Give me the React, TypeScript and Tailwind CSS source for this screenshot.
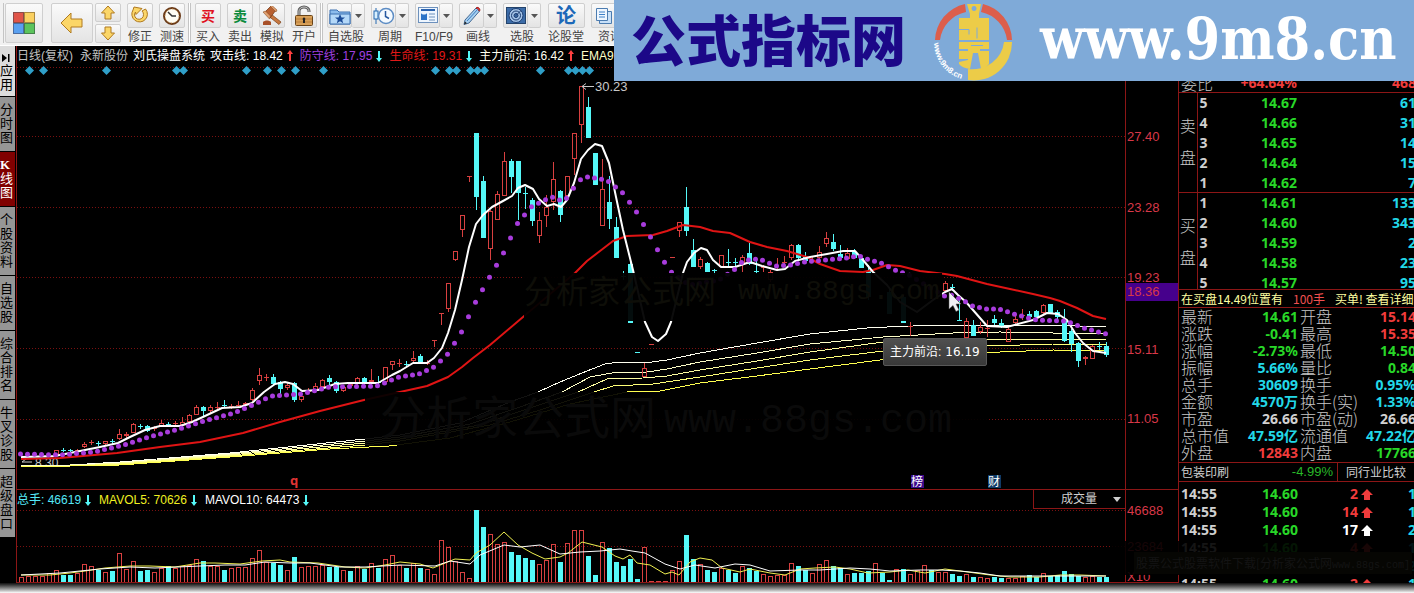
import type { ReactNode } from "react";

const UP = "#d84040";
const DOWN = "#55f8f8";

// [slot, high, bodyTop, bodyBottom, low, direction]
type Candle = [number, number, number, number, number, "u" | "d"];

const candles: Candle[] = [
  [5, 450, 450, 455, 455, "u"], [6, 448, 450, 451, 452, "d"], [7, 449, 450, 451, 452, "d"], [8, 449, 450, 452, 453, "u"],
  [9, 442, 444, 447, 448, "u"], [10, 440, 442, 443, 445, "u"], [11, 441, 443, 444, 446, "d"], [12, 441, 441, 444, 445, "u"],
  [13, 439, 441, 442, 444, "d"], [14, 429, 434, 439, 440, "u"], [15, 432, 434, 436, 438, "u"], [16, 423, 424, 433, 433, "u"],
  [17, 424, 426, 427, 429, "d"], [18, 425, 426, 431, 432, "d"], [19, 426, 428, 429, 431, "u"], [20, 420, 423, 426, 427, "u"],
  [21, 422, 424, 425, 427, "d"], [22, 421, 423, 424, 426, "u"], [23, 417, 422, 425, 426, "u"], [24, 414, 415, 422, 422, "u"],
  [25, 405, 407, 415, 415, "u"], [26, 406, 407, 411, 416, "d"], [27, 405, 407, 411, 413, "u"], [28, 402, 407, 408, 411, "u"],
  [29, 400, 405, 406, 408, "d"], [30, 404, 406, 407, 409, "u"], [31, 401, 405, 406, 408, "u"], [32, 402, 403, 405, 406, "u"],
  [33, 388, 390, 400, 401, "u"], [34, 368, 375, 381, 385, "u"], [35, 374, 377, 378, 381, "u"], [36, 374, 377, 384, 385, "d"],
  [37, 381, 382, 389, 394, "d"], [38, 382, 385, 388, 390, "u"], [39, 382, 383, 400, 402, "d"], [40, 395, 396, 400, 402, "u"],
  [41, 388, 390, 392, 393, "u"], [42, 383, 386, 391, 392, "u"], [43, 379, 380, 387, 388, "u"], [44, 375, 378, 382, 385, "d"],
  [45, 381, 382, 391, 393, "d"], [46, 386, 387, 391, 392, "u"], [47, 382, 384, 386, 387, "u"], [48, 377, 378, 384, 385, "u"],
  [49, 377, 378, 383, 384, "d"], [50, 369, 380, 382, 384, "u"], [51, 376, 382, 383, 385, "d"], [52, 367, 367, 382, 382, "u"],
  [53, 361, 361, 365, 370, "u"], [54, 359, 363, 364, 367, "u"], [55, 361, 364, 365, 367, "d"], [56, 351, 358, 361, 363, "u"],
  [57, 354, 356, 363, 363, "d"], [58, 360, 363, 364, 365, "u"], [59, 340, 340, 341, 347, "u"], [60, 313, 313, 314, 325, "u"],
  [61, 283, 283, 309, 312, "u"], [62, 251, 251, 260, 261, "u"], [63, 215, 215, 230, 237, "u"], [64, 176, 176, 177, 182, "u"],
  [65, 133, 133, 197, 210, "d"], [66, 176, 181, 238, 238, "d"], [67, 210, 211, 249, 260, "u"], [68, 191, 194, 220, 220, "u"],
  [69, 152, 161, 196, 196, "u"], [70, 159, 161, 177, 193, "d"], [71, 161, 161, 193, 220, "d"], [72, 187, 193, 194, 209, "d"],
  [73, 198, 200, 221, 226, "d"], [74, 212, 220, 236, 243, "u"], [75, 195, 207, 216, 227, "u"], [76, 162, 179, 202, 210, "u"],
  [77, 190, 191, 215, 222, "d"], [78, 176, 176, 196, 200, "u"], [79, 133, 133, 159, 175, "u"], [80, 86, 86, 125, 143, "u"],
  [81, 97, 107, 138, 138, "d"], [82, 153, 153, 185, 185, "d"], [83, 159, 189, 226, 226, "u"], [84, 176, 202, 219, 229, "d"],
  [85, 217, 227, 258, 258, "d"], [86, 271, 276, 277, 280, "d"], [87, 260, 264, 323, 323, "d"], [88, 352, 352, 353, 353, "d"],
  [89, 363, 368, 377, 377, "u"], [90, 344, 344, 345, 345, "u"], [93, 257, 257, 258, 258, "u"], [94, 222, 222, 231, 237, "u"],
  [95, 187, 207, 231, 236, "d"], [96, 239, 250, 267, 267, "d"], [97, 257, 259, 267, 269, "u"], [98, 262, 263, 272, 272, "d"],
  [99, 269, 270, 271, 275, "d"], [100, 255, 255, 267, 267, "u"], [101, 249, 262, 263, 267, "d"], [102, 258, 262, 263, 266, "d"],
  [103, 255, 257, 265, 272, "u"], [104, 243, 253, 264, 265, "d"], [105, 260, 271, 272, 274, "d"], [106, 265, 267, 268, 272, "u"],
  [107, 270, 272, 280, 282, "u"], [108, 258, 269, 270, 271, "u"], [109, 256, 262, 263, 267, "u"], [110, 244, 245, 258, 260, "u"],
  [111, 244, 245, 258, 260, "d"], [112, 252, 257, 261, 264, "d"], [113, 257, 260, 261, 263, "u"], [114, 246, 252, 258, 260, "u"],
  [115, 232, 238, 244, 247, "u"], [116, 234, 242, 249, 251, "d"], [117, 245, 254, 258, 260, "d"], [118, 248, 253, 259, 260, "u"],
  [119, 249, 252, 258, 259, "d"], [120, 256, 258, 268, 268, "d"], [121, 265, 271, 297, 300, "d"], [124, 288, 292, 314, 314, "d"],
  [126, 295, 297, 323, 323, "d"], [127, 322, 326, 327, 336, "u"], [132, 281, 283, 291, 292, "u"], [133, 284, 287, 288, 291, "d"],
  [134, 300, 320, 321, 321, "d"], [135, 318, 321, 338, 338, "u"], [136, 320, 325, 336, 336, "d"], [137, 322, 327, 332, 334, "u"],
  [138, 320, 328, 329, 337, "u"], [139, 315, 319, 323, 325, "d"], [140, 319, 323, 327, 328, "d"], [141, 326, 329, 342, 342, "u"],
  [142, 315, 319, 323, 324, "u"], [143, 309, 315, 316, 320, "u"], [144, 311, 314, 317, 320, "d"], [145, 310, 311, 317, 318, "d"],
  [146, 304, 305, 313, 314, "u"], [147, 304, 304, 313, 314, "d"], [148, 310, 312, 317, 319, "d"], [149, 309, 321, 341, 342, "d"],
  [150, 329, 331, 344, 352, "d"], [151, 342, 343, 361, 367, "d"], [152, 356, 357, 359, 365, "u"], [153, 345, 346, 359, 359, "u"],
  [154, 342, 346, 347, 350, "d"], [155, 342, 346, 355, 357, "d"],
];

// top of each volume bar, negative for a falling day
const volumes = [
  577, 576, 576, 576, 573, 570, -575, -575, 573, 564, 566, -570, 572, -571, 553, 569, 561, -571, -570, 572,
  568, -566, 568, 566, 565, 559, -561, 566, 566, -570, 568, 567, 567, 558, 550, 562, -563, -565, 570, -557,
  567, 566, 566, 565, -567, -567, 570, -571, 566, -569, 563, -568, 559, 555, 565, -568, 563, -568, 569, 574,
  540, 547, 561, 572, 578, -510, -527, 534, 544, 542, -552, -555, -558, -560, 564, 560, 544, -562, 543, 530,
  530, -556, -575, 542, -548, -562, -566, -559, -579, 547, 581, 581, 581, 570, 561, -535, -559, 564, -570, -572,
  568, -570, -573, 566, -568, -571, 574, 576, 575, 575, 563, -566, -570, 573, 564, 560, -566, -568, 574, -573,
  -573, -571, 563, -573, -580, 569, -569, 574, 570, 565, -570, 572, 572, -574, -576, 574, -577, 577, 578, -577,
  -578, 578, 578, 576, -575, -577, 573, -576, -575, -571, -574, -576, 577, 576, -577, -577,
];

const attackLine =
  "21,457 55,456 80,451 100,447 118,443 130,437 145,430 160,426 180,426 192,422 205,416 222,408 240,407 252,403 264,392 275,384 285,382 293,384 302,391 318,390 335,384 348,383 378,383 392,375 400,371 413,363 427,363 434,358 442,348 448,333 455,310 462,280 469,247 476,224 483,215 492,207 503,201 512,196 518,188 525,185 533,189 539,199 547,206 554,204 561,207 567,200 574,183 581,159 588,150 595,144 602,146 609,163 616,197 623,230 633,270 645,322 652,337 658,341 666,334 671,322 683,273 687,262 694,253 701,248 707,250 713,260 721,267 735,267 750,262 762,266 777,270 785,269 795,261 810,257 827,254 843,251 855,251 863,260 873,272 887,285 900,302 917,312 933,300 945,292 952,289 958,295 966,302 987,326 1007,327 1033,320 1047,313 1058,314 1067,320 1075,333 1083,343 1093,351 1106,353";
const lifeLine =
  "21,459 60,458 83,456 117,453 160,447 200,442 243,433 280,422 320,411 364,400 400,392 427,386 448,377 462,367 473,358 490,345 523,317 575,273 587,261 600,251 613,241 627,236 653,235 667,231 683,225 700,227 713,231 730,233 750,242 767,247 787,251 807,257 820,264 840,271 863,272 873,270 887,265 900,266 920,271 945,274 957,276 987,284 1010,289 1033,294 1050,298 1060,301 1077,308 1093,316 1106,319";
const emaLines = [
  { color: "#fffff0", points: "21,465 70,465 120,462 230,453 365,439 400,435 460,423 510,402 538,392 560,382 587,371 605,364 620,362 652,362 667,360 700,353 757,343 810,334 867,328 887,327 940,325 1053,325 1106,327" },
  { color: "#ffffc8", points: "21,465 70,465 120,463 230,454 365,441 400,437 470,424 520,407 562,392 590,377 617,372 647,372 667,369 700,362 757,353 810,344 883,337 953,333 1000,332 1106,334" },
  { color: "#ffffa0", points: "21,466 70,466 120,463 230,455 365,443 400,439 480,425 530,408 578,392 607,379 643,378 667,376 700,370 757,361 810,352 883,342 947,339 1106,339" },
  { color: "#ffff78", points: "21,466 70,466 120,464 230,456 365,445 400,441 490,425 540,410 594,392 613,386 653,384 700,377 757,368 810,360 883,351 987,346 1053,344 1106,344" },
  { color: "#ffff50", points: "21,466 70,466 120,465 230,457 330,449 389,446 450,438 510,422 570,404 627,392 660,391 700,383 757,376 810,369 880,360 1000,352 1053,350 1106,351" },
];
const defencePoints: [number, number][] = [
  [21, 454], [62, 455], [95, 452], [125, 445], [150, 437], [180, 429], [205, 421], [235, 413], [258, 403], [272, 396],
  [288, 395], [302, 394], [315, 391], [330, 387], [378, 386], [400, 377], [420, 374], [435, 367], [448, 355], [462, 333],
  [475, 305], [490, 278], [504, 254], [518, 224], [532, 207], [546, 200], [553, 197], [560, 200], [567, 199], [574, 189],
  [581, 180], [588, 177], [602, 179], [609, 181], [623, 192], [637, 211], [651, 236], [664, 260], [672, 272], [690, 285],
  [720, 280], [735, 270], [741, 263], [749, 260], [755, 259], [763, 260], [777, 266], [792, 265], [805, 262], [827, 260],
  [847, 258], [860, 256], [868, 259], [882, 263], [896, 270], [910, 275], [945, 296], [952, 295], [967, 302], [973, 306],
  [987, 309], [1000, 309], [1015, 314], [1037, 320], [1067, 321], [1085, 328], [1107, 334],
];
const maVol5 =
  "21,575 50,575 70,573 85,571 105,568 130,566 150,566 175,567 200,563 215,563 240,564 262,561 280,560 290,562 318,563 345,567 365,568 385,565 400,562 420,564 433,568 455,559 470,560 476,553 490,545 504,532 518,545 532,553 545,559 560,557 568,553 582,542 602,547 615,556 623,559 630,555 637,563 650,565 665,574 672,572 679,575 690,562 700,558 712,560 722,568 740,572 750,569 770,573 785,575 800,569 815,568 835,567 850,569 868,573 890,572 908,570 925,573 945,569 960,571 990,575 1010,577 1040,577 1060,575 1080,575 1106,576";
const maVol10 =
  "21,575 60,573 100,569 130,567 155,568 200,566 225,565 245,565 265,562 290,563 310,563 340,567 365,567 400,565 435,566 450,561 470,564 480,555 504,545 520,547 540,545 560,554 580,552 600,551 620,549 632,551 645,553 665,564 680,569 695,565 715,568 735,564 750,565 770,571 800,570 820,570 850,568 870,569 890,571 920,570 940,570 960,571 980,573 1000,576 1060,576 1106,576";
const diamonds = [29, 43, 106, 176, 183, 246, 267, 281, 295, 323, 435, 449, 456, 470, 477, 484, 540, 568, 575, 582, 589];

const slotX = (i: number) => 21.5 + i * 7;

function interpolate(points: [number, number][], x: number) {
  for (let i = 1; i < points.length; i++) {
    const [x0, y0] = points[i - 1];
    const [x1, y1] = points[i];
    if (x <= x1) return y0 + ((y1 - y0) * (x - x0)) / (x1 - x0);
  }
  return points[points.length - 1][1];
}

function GridLine({ y }: { y: number }) {
  return <line x1={17} x2={1125} y1={y + 0.5} y2={y + 0.5} stroke="#7a1010" strokeDasharray="1 2" />;
}

function CandleShape({ data }: { data: Candle }) {
  const [slot, high, top, bottom, low, dir] = data;
  const x = slotX(slot);
  const color = dir === "u" ? UP : DOWN;
  if (bottom - top <= 1) {
    return (
      <g stroke={color}>
        <line x1={x} x2={x} y1={high} y2={low} />
        <line x1={x - 2.5} x2={x + 2.5} y1={top + 0.5} y2={top + 0.5} />
      </g>
    );
  }
  return (
    <g stroke={color}>
      <line x1={x} x2={x} y1={high} y2={dir === "u" ? top : low} />
      <line x1={x} x2={x} y1={bottom} y2={low} />
      {dir === "u" ? (
        <rect x={x - 2} y={top + 0.5} width={4} height={bottom - top - 1} fill="none" />
      ) : (
        <rect x={x - 2.5} y={top} width={5} height={bottom - top} fill={color} stroke="none" />
      )}
    </g>
  );
}

function PriceChart() {
  return (
    <svg width={1108} height={423} viewBox="17 66 1108 423" className="block max-w-none" aria-label="日线">
      {[67, 136, 207, 277, 348, 419].map((y) => (
        <GridLine key={y} y={y} />
      ))}
      {diamonds.map((x) => (
        <path key={x} d={`M${x + 0.5} 66l4.5 4.5l-4.5 4.5l-4.5 -4.5z`} fill="#2f9fc8" />
      ))}
      <text x={35} y={467} fontSize={12} fill="#c8c8c8" className="font-['Liberation_Sans',sans-serif]">8.30</text>
      <path d="M22 462h10M22 462l4 -3" stroke="#c8c8c8" fill="none" />
      <rect x={30} y={452} width={32} height={7} fill="#000" />
      {emaLines.map((line) => (
        <polyline key={line.color} points={line.points} fill="none" stroke={line.color} shapeRendering="crispEdges" />
      ))}
      {candles.map((c) => (
        <CandleShape key={c[0]} data={c} />
      ))}
      <polyline points={lifeLine} fill="none" stroke="#e01414" strokeWidth={2} strokeLinejoin="round" />
      <polyline points={attackLine} fill="none" stroke="#fff" strokeWidth={2} strokeLinejoin="round" />
      {Array.from({ length: 156 }, (_, i) => (
        <circle key={i} cx={slotX(i) - 1} cy={interpolate(defencePoints, slotX(i))} r={2.5} fill="#a83cdc" />
      ))}

      <rect x={524} y={273} width={418} height={48} fill="#000" opacity={0.95} />
      <rect x={365} y={392} width={623} height={53} fill="#000" opacity={0.93} />
      <g fill="#0e0e08" className="font-['Liberation_Mono','Noto_Sans_CJK_SC',monospace]">
        <text x={524} y={303} fontSize={32}>分析家公式网</text>
        <text x={738} y={299} fontSize={28}>www.88gs.com</text>
      </g>
      <g fill="#0a0a0a" className="font-['Liberation_Mono','Noto_Sans_CJK_SC',monospace]">
        <text x={380} y={434} fontSize={46}>分析家公式网</text>
        <text x={664} y={432} fontSize={40}>www.88gs.com</text>
      </g>

      <path d="M582 86.5h12M582 86.5l4 -3M582 86.5l4 3" stroke="#c8c8c8" fill="none" />
      <text x={595} y={91} fontSize={13} fill="#c8c8c8" className="font-['Liberation_Sans',sans-serif]">30.23</text>

      <text x={290} y={485} fontSize={13} fontWeight={700} fill="#e03434" className="font-['Noto_Sans',sans-serif]">q</text>
      <rect x={911} y={475} width={13} height={13} fill="#3c0a8c" />
      <rect x={988} y={475} width={13} height={13} fill="#103a66" />
      <g fontSize={12} fill="#fff" className="font-['Noto_Sans_CJK_SC',sans-serif]">
        <text x={911} y={486}>榜</text>
        <text x={988} y={486}>财</text>
      </g>
      <path d="M949 292v17l4 -3.500l3 6l3 -1.500l-3 -6h5z" fill="#f0f0f4" stroke="#555" strokeWidth={0.5} />
    </svg>
  );
}

function VolumeChart() {
  return (
    <svg width={1108} height={73} viewBox="17 510 1108 73" className="block max-w-none" aria-label="成交量">
      <GridLine y={510} />
      <GridLine y={546} />
      {volumes.map((v, i) => {
        const top = Math.abs(v);
        return v < 0 ? (
          <rect key={i} x={slotX(i) - 2.5} y={top} width={5} height={583 - top} fill={DOWN} />
        ) : (
          <rect key={i} x={slotX(i) - 2} y={top + 0.5} width={4} height={582 - top} fill="none" stroke={UP} />
        );
      })}
      <line x1={17} x2={1125} y1={582.5} y2={582.5} stroke="#8c1616" />
      <polyline points={maVol5} fill="none" stroke="#f0f050" />
      <polyline points={maVol10} fill="none" stroke="#fff" />
    </svg>
  );
}

const axisLabels: [string, number][] = [
  ["27.40", 136], ["23.28", 207], ["19.23", 277], ["15.11", 349], ["11.05", 418], ["46688", 510], ["23684", 546],
];

function PriceAxis() {
  return (
    <svg width={52} height={537} viewBox="1126 46 52 537" className="block">
      <line x1={1126} x2={1178} y1={489.5} y2={489.5} stroke="#8c1616" />
      <rect x={1126} y={283} width={52} height={18} fill="#46008c" />
      <g fontSize={13} fill="#d83848" className="font-['Liberation_Sans',sans-serif]">
        {axisLabels.map(([label, y]) => (
          <text key={label} x={1127} y={y + 5}>{label}</text>
        ))}
        <text x={1127} y={296}>18.36</text>
        <text x={1127} y={581}>X10</text>
      </g>
      <line x1={1126} x2={1178} y1={582.5} y2={582.5} stroke="#8c1616" />
    </svg>
  );
}

function ArrowMark({ up, color }: { up?: boolean; color: string }) {
  return (
    <svg width={6} height={12} viewBox="0 0 6 12" className="shrink-0">
      {up ? <path d="M3 0l3 4h-2v7h-2v-7h-2z" fill={color} /> : <path d="M3 12l3 -4h-2v-7h-2v7h-2z" fill={color} />}
    </svg>
  );
}

function Indicator({ label, value, color, up }: { label: string; value: string; color: string; up?: boolean }) {
  return (
    <span className="flex items-center gap-1">
      <span className={color}>{label}: {value}</span>
      <ArrowMark up={up} color={up ? "#ff4040" : "#55f8f8"} />
    </span>
  );
}

/* ---------- toolbar ---------- */

const btn = "flex items-center justify-center rounded-xs border border-[#cfcfcf] bg-gradient-to-b from-[#fafafa] to-[#e4e4e4]";

function Tool({ label, children }: { label: string; children: ReactNode }) {
  return (
    <button className="flex w-8 flex-col items-center text-xs leading-[18px] whitespace-nowrap text-[#444]">
      <span className={`${btn} h-[25px] w-[26px]`}>{children}</span>
      {label}
    </button>
  );
}

function MenuTool({ label, menu = true, children }: { label: string; menu?: boolean; children: ReactNode }) {
  return (
    <button className="flex w-11 flex-col items-center text-xs leading-[18px] whitespace-nowrap text-[#444]">
      <span className="flex">
        <span className={`${btn} h-[25px] ${menu ? "w-[25px]" : "w-[37px]"}`}>{children}</span>
        {menu && (
          <span className={`${btn} h-[25px] w-[13px] border-l-0`}>
            <svg width={7} height={4}><path d="M0 0h7l-3.500 4z" fill="#555" /></svg>
          </span>
        )}
      </span>
      {label}
    </button>
  );
}

function Separator() {
  return <span className="mr-px h-10 w-[3px] shrink-0 border-x border-[#c4c4c4] bg-white" />;
}

const gold = { fill: "#fbd668", stroke: "#b07a20", strokeWidth: 1 };

function Toolbar() {
  return (
    <header className="flex h-[46px] items-start overflow-hidden border-b border-white bg-[#f1f1f1] pt-[3px] font-['Liberation_Sans','Noto_Sans_CJK_SC',sans-serif]">
      <span className="ml-px h-10 w-[3px] shrink-0 border-r border-[#c4c4c4]" />
      <button className={`${btn} ml-px h-10 w-[38px] shrink-0`} aria-label="主页">
        <svg width={22} height={22}>
          <rect x={0.5} y={0.5} width={10} height={10} fill="#e05448" stroke="#8c4a48" />
          <rect x={11.500} y={0.5} width={10} height={10} fill="#fad060" stroke="#a88840" />
          <rect x={0.5} y={11.500} width={10} height={10} fill="#5aa0f0" stroke="#4a6ca0" />
          <rect x={11.500} y={11.500} width={10} height={10} fill="#5cc45c" stroke="#44804a" />
        </svg>
      </button>
      <button className={`${btn} ml-2 h-10 w-[42px] shrink-0`} aria-label="后退">
        <svg width={24} height={22}><path d="M1 11l10 -10v6h11v8h-11v6z" {...gold} /></svg>
      </button>
      <div className="ml-0.5 flex shrink-0 flex-col gap-0.5">
        <button className={`${btn} h-[19px] w-[26px]`} aria-label="上翻">
          <svg width={16} height={15}><path d="M8 1l6.500 7h-3.500v6h-6v-6h-3.500z" {...gold} /></svg>
        </button>
        <button className={`${btn} h-[19px] w-[26px]`} aria-label="下翻">
          <svg width={16} height={15}><path d="M8 14l6.500 -7h-3.500v-6h-6v6h-3.500z" {...gold} /></svg>
        </button>
      </div>
      <div className="ml-[3px] flex shrink-0">
        <Tool label="修正">
          <svg width={20} height={20} viewBox="0 0 20 20">
            <path d="M4 1l8 1.500l-6 6l-0.500 -2.500a4.500 4.500 0 1 0 8 2.500q0 -2 -1.500 -3.500l3.500 -2a7.800 7.800 0 1 1 -12.500 1z" {...gold} />
          </svg>
        </Tool>
        <Tool label="测速">
          <svg width={20} height={20} viewBox="0 0 20 20">
            <circle cx={10} cy={10} r={8} fill="#fffdf4" stroke="#6a3a18" strokeWidth={2} />
            <circle cx={10} cy={10} r={7} fill="none" stroke="#d8a050" strokeDasharray="1 2.660" />
            <path d="M6 6l4 4h4" stroke="#333" strokeWidth={1.500} fill="none" />
          </svg>
        </Tool>
      </div>
      <Separator />
      <div className="flex shrink-0">
        <Tool label="买入"><b className="text-sm text-[#e01020]">买</b></Tool>
        <Tool label="卖出"><b className="text-sm text-[#0a8a3a]">卖</b></Tool>
        <Tool label="模拟">
          <svg width={22} height={20} viewBox="0 0 22 20">
            <path d="M10 8l10 8l-2 2.500l-10 -8z" fill="#c87840" stroke="#7a4018" strokeWidth={0.700} />
            <path d="M4 6l6 -6l5 4l-6 8z" fill="#b86030" stroke="#6a3010" strokeWidth={0.700} />
            <path d="M2 6l2.500 -1l5 5l-1 3zM9 0l2 -0.500l5 4.500l-1 2z" fill="#e0a070" stroke="#7a4018" strokeWidth={0.500} />
            <path d="M2 16c2 -2 6 -2 8 0v3h-8z" fill="#a85028" />
          </svg>
        </Tool>
        <Tool label="开户">
          <svg width={20} height={22} viewBox="0 0 20 22">
            <path d="M5 11v-5a5 4 0 0 1 10 0v1" fill="none" stroke="#5a5a5a" strokeWidth={3} />
            <path d="M5 11v-5a5 4 0 0 1 10 0v1" fill="none" stroke="#c8c8c8" strokeWidth={1} />
            <rect x={1.500} y={10.500} width={17} height={10} rx={1} fill="#d8a058" stroke="#6a4418" />
            <path d="M2 14h16M2 17h16" stroke="#b87c38" />
            <path d="M10 12.500a1.500 1.500 0 0 1 1 2.500v3h-2v-3a1.500 1.500 0 0 1 1 -2.500z" fill="#222" />
          </svg>
        </Tool>
      </div>
      <Separator />
      <div className="flex shrink-0">
        <MenuTool label="自选股">
          <svg width={22} height={18} viewBox="0 0 22 18">
            <path d="M1 3h7l2 2h11v12h-20z" fill="#8cbcec" stroke="#3c70b0" />
            <path d="M1 7h20v10h-20z" fill="#b4d8f8" stroke="#3c70b0" />
            <path d="M11 7l1.500 3.500h3.500l-2.800 2.200l1 3.500l-3.200 -2l-3.200 2l1 -3.500l-2.800 -2.200h3.500z" fill="#1c4c98" />
          </svg>
        </MenuTool>
        <MenuTool label="周期">
          <svg width={22} height={20} viewBox="0 0 22 20">
            <path d="M3 2v16" stroke="#2468b0" />
            <rect x={1} y={5} width={4} height={8} fill="#d8f0ff" stroke="#2468b0" />
            <circle cx={13} cy={10} r={7.500} fill="#f4faff" stroke="#5c8cc4" strokeWidth={1.500} />
            <path d="M12.500 5v5.500l3.500 2" stroke="#2458a0" strokeWidth={1.500} fill="none" />
          </svg>
        </MenuTool>
        <MenuTool label="F10/F9">
          <svg width={20} height={17} viewBox="0 0 20 17">
            <rect x={0.500} y={0.500} width={19} height={15} fill="#eef6ff" stroke="#6c90bc" />
            <path d="M3 3h14" stroke="#2c64b0" strokeWidth={2} />
            <path d="M3 6c1 2 5 2 6 0v7h-6z" fill="#2c74c8" />
            <path d="M11 7h6M11 10h6M11 13h6" stroke="#6c90bc" />
          </svg>
        </MenuTool>
        <MenuTool label="画线">
          <svg width={20} height={20} viewBox="0 0 20 20">
            <path d="M3 14l11 -12l3.500 3l-10.500 12l-5 1.500z" fill="#a8d0f0" stroke="#446a94" />
            <path d="M14 2c1.500 -2 5 1 3.500 3l-3.500 -3z" fill="#e84040" stroke="#a02020" />
            <path d="M5 15l11 -12" stroke="#3c7cc0" />
            <path d="M2 18.500l1 -3l2 1.800z" fill="#222" />
          </svg>
        </MenuTool>
        <MenuTool label="选股">
          <svg width={20} height={18} viewBox="0 0 20 18">
            <rect x={0.500} y={0.500} width={19} height={16} fill="#3c6ca8" stroke="#24446c" />
            <circle cx={10} cy={8.500} r={7} fill="#a4c4e8" stroke="#1c3c70" />
            <circle cx={10} cy={8.500} r={4.500} fill="none" stroke="#1c3c70" />
            <circle cx={10} cy={8.500} r={2} fill="#3c6ca8" stroke="#1c3c70" />
            <path d="M10 8.500l5 -5" stroke="#1c3c70" />
          </svg>
        </MenuTool>
        <MenuTool label="论股堂" menu={false}>
          <b className="text-xl leading-none text-[#1c68b8]">论</b>
        </MenuTool>
        <MenuTool label="资讯">
          <svg width={18} height={18} viewBox="0 0 18 18">
            <path d="M4.500 4.500h12v12h-12z" fill="#c8e0f8" stroke="#4c7cb0" />
            <path d="M1.500 1.500h11v12h-11z" fill="#eef6ff" stroke="#4c7cb0" />
            <path d="M4 5h6M4 7.500h6M4 10h6" stroke="#3c80c8" />
          </svg>
        </MenuTool>
      </div>
    </header>
  );
}

/* ---------- banner ---------- */

function Banner() {
  return (
    <div className="absolute top-0 right-0 left-[614px] z-10 flex h-[81px] items-center overflow-hidden bg-[#7faad8] whitespace-nowrap">
      <strong className="ml-[17px] w-[278px] shrink-0 pb-2 font-['Noto_Sans_CJK_SC',sans-serif] text-[55px] leading-[60px] font-black text-[#1c0888]">
        公式指标网
      </strong>
      <svg width={80} height={80} viewBox="934 0 80 80" className="ml-6 shrink-0">
        <g fill="#dc5e4c">
          <path d="M936 39A38 38 0 0 1 966 3L967 11A33 33 0 0 0 941 39z" />
          <path d="M1013 39A38 38 0 0 0 984 3L982 11A33 33 0 0 1 1008 39z" />
        </g>
        <g fill="#eccc48">
          <path d="M1013 41A38 38 0 0 1 969 79V68A32 30 0 0 0 1005 41z" />
          <path
            fillRule="evenodd"
            d="M968 3h14l-2 10v4h10v22h-30v-10h9v-1h-9v-11h11v-4zM975 5a2.500 2.500 0 1 0 0.100 0z"
          />
          <path d="M960 41h30v7h-9v2h9v13q-3 4 -8 5l-3 -16h-5l-3 16q-8 -1 -11 -5v-2l9 -2v-1h-9v-8h9v-2h-9z" />
        </g>
        <path d="M960 28.500h10v5M978 26.500v11M972 44.500h12" stroke="#7faad8" fill="none" />
        <path id="seal-arc" d="M935 42A38 38 0 0 0 968 79" fill="none" />
        <text fontSize={8} fontWeight={700} fill="#fff" className="font-['Liberation_Sans',sans-serif]">
          <textPath href="#seal-arc">www.9m8.cn</textPath>
        </text>
      </svg>
      <a href="#" className="ml-[27px] pb-1 font-['DejaVu_Serif_Condensed','DejaVu_Serif',serif] text-[57px] leading-[60px] font-bold text-white">
        www.9m8.cn
      </a>
    </div>
  );
}

/* ---------- side navigation ---------- */

const tabs = ["分时图", "K线图", "个股资料", "自选股", "综合排名", "牛叉诊股", "超级盘口"];

function SideTabs() {
  return (
    <nav className="mr-px flex w-[15px] shrink-0 flex-col text-[13px] leading-[14px]">
      <button className="flex flex-col items-start bg-[#dcdcdc] pt-1.5 pb-1 text-black">
        <svg width={10} height={12} className="ml-px"><path d="M1 2l5 4l-5 4zM7 2h1.500v8h-1.500z" /></svg>
        <span className="w-[13px] text-left break-all">应用</span>
      </button>
      {tabs.map((tab) => (
        <button
          key={tab}
          className={`border-t border-black py-1.5 text-left ${tab === "K线图" ? "bg-[#800000] text-white" : "bg-[#969696] text-black"}`}
        >
          {tab.split("").map((ch) => (
            <span key={ch} className="block w-[13px]">{ch === "K" ? <b className="font-['Liberation_Serif',serif]">K</b> : ch}</span>
          ))}
        </button>
      ))}
    </nav>
  );
}

/* ---------- quote panel ---------- */

const sells = [["5", "14.67", "61"], ["4", "14.66", "31"], ["3", "14.65", "14"], ["2", "14.64", "15"], ["1", "14.62", "7"]];
const buys = [["1", "14.61", "133"], ["2", "14.60", "343"], ["3", "14.59", "2"], ["4", "14.58", "23"], ["5", "14.57", "95"]];

const R = "text-[#f03c3c]";
const G = "text-[#28d828]";
const C = "text-[#22d8e8]";
const W = "text-[#d0d0d0]";

const stats = [
  ["最新", "14.61", G, "开盘", "15.14", R],
  ["涨跌", "-0.41", G, "最高", "15.35", R],
  ["涨幅", "-2.73%", G, "最低", "14.50", G],
  ["振幅", "5.66%", C, "量比", "0.84", G],
  ["总手", "30609", C, "换手", "0.95%", C],
  ["金额", "4570万", C, "换手(实)", "1.33%", C],
  ["市盈", "26.66", W, "市盈(动)", "26.66", W],
  ["总市值", "47.59亿", C, "流通值", "47.22亿", C],
  ["外盘", "12843", R, "内盘", "17766", G],
];

const trades = [
  ["14:55", "14.60", "2", "#f03c3c", R, "1"],
  ["14:55", "14.60", "14", "#f03c3c", R, "1"],
  ["14:55", "14.60", "17", "#ffffff", "text-white", "2"],
  ["14:55", "14.60", "4", "#f03c3c", R, "1"],
  ["14:55", "14.60", "6", "#f03c3c", R, "2"],
  ["14:55", "14.60", "2", "#f03c3c", R, "1"],
];

const num = "font-['Noto_Sans','Noto_Sans_CJK_SC',sans-serif] text-sm font-bold";

function OrderBook({ side, rows }: { side: string; rows: string[][] }) {
  return (
    <table className="w-[237px] table-fixed border-collapse">
      <colgroup>
        <col className="w-[18px]" />
        <col className="w-5" />
        <col className="w-20" />
        <col />
      </colgroup>
      <tbody>
        {rows.map(([level, price, amount], i) => (
          <tr key={level} className="h-5 leading-5">
            {i === 0 && (
              <th rowSpan={5} className="border-r border-[#8c1616] p-0 pb-1 text-base leading-8 font-light text-[#c8c8c8]">
                {side.split("").map((ch) => <span key={ch} className="block">{ch}</span>)}
              </th>
            )}
            <td className={`${num} ${W} p-0 pl-0.5 leading-5`}>{level}</td>
            <td className={`${num} ${G} p-0 text-right leading-5`}>{price}</td>
            <td className={`${num} ${C} p-0 text-right leading-5`}>{amount}</td>
          </tr>
        ))}
      </tbody>
    </table>
  );
}

function QuotePanel() {
  return (
    <aside className="w-[236px] shrink-0 overflow-hidden border-l border-[#8c1616] pt-7 font-['Noto_Sans_CJK_SC',sans-serif]">
      <div className="flex h-[18px] w-[237px] items-center text-base leading-[18px]">
        <span className="w-[59px] pl-0.5 font-light text-[#c8c8c8]">委比</span>
        <span className={`${num} ${R} w-[59px] text-right`}>+64.64%</span>
        <span className={`${num} ${R} flex-1 text-right`}>468</span>
      </div>
      <div className="h-[100px] overflow-hidden border-t border-[#8c1616]">
        <OrderBook side="卖盘" rows={sells} />
      </div>
      <div className="h-[97px] overflow-hidden border-t border-[#8c1616]">
        <OrderBook side="买盘" rows={buys} />
      </div>
      <p className="flex h-[18px] items-center gap-2.5 border-t border-[#8c1616] pl-0.5 text-xs leading-[17px] whitespace-nowrap text-[#ffffa0]">
        <span>在买盘14.49位置有</span>
        <span className="text-[#f05050]">100手</span>
        <span>买单! 查看详细</span>
      </p>
      <div className="border-t border-[#8c1616] pb-px">
        <table className="w-[237px] table-fixed border-collapse">
          <colgroup>
            <col className="w-[50px]" />
            <col className="w-[69px]" />
            <col className="w-[60px]" />
            <col />
          </colgroup>
          <tbody>
            {stats.map(([l1, v1, c1, l2, v2, c2]) => (
              <tr key={l1} className="h-[17px] text-base leading-[17px] whitespace-nowrap text-[#c8c8c8]">
                <th className="p-0 pl-0.5 text-left font-light">{l1}</th>
                <td className={`${num} ${c1} p-0 text-right leading-[17px]`}>{v1}</td>
                <th className="p-0 pl-0.5 text-left font-light">{l2}</th>
                <td className={`${num} ${c2} p-0 text-right leading-[17px]`}>{v2}</td>
              </tr>
            ))}
          </tbody>
        </table>
      </div>
      <div className="flex h-5 items-center border-y border-[#8c1616] text-xs leading-[18px] text-[#d0d0d0]">
        <span className="w-[108px] pl-0.5">包装印刷</span>
        <span className="w-[51px] border-r border-[#8c1616] pr-1 text-right font-['Liberation_Sans',sans-serif] text-[13px] text-[#28b828]">-4.99%</span>
        <button className="pl-2 whitespace-nowrap">同行业比较</button>
      </div>
      <div className="h-[101px] overflow-hidden pt-[3px]">
        <table className="w-[237px] table-fixed border-collapse">
          <colgroup>
            <col className="w-[50px]" />
            <col className="w-[69px]" />
            <col className="w-[60px]" />
            <col className="w-4" />
            <col />
          </colgroup>
          <tbody>
            {trades.map(([time, price, lots, arrow, tone, count], i) => (
              <tr key={i} className={`${num} h-[18px] leading-[18px]`}>
                <td className={`${W} p-0 pl-0.5`}>{time}</td>
                <td className={`${G} p-0 text-right`}>{price}</td>
                <td className={`${tone} p-0 text-right`}>{lots}</td>
                <td className="p-0 pl-[3px]">
                  <svg width={12} height={11} className="block"><path d="M6 0l6 6h-3v5h-6v-5h-3z" fill={arrow} /></svg>
                </td>
                <td className={`${C} p-0 text-right`}>{count}</td>
              </tr>
            ))}
          </tbody>
        </table>
      </div>
    </aside>
  );
}

export default function App() {
  return (
    <div className="relative overflow-hidden bg-black font-['Liberation_Sans','Noto_Sans_CJK_SC',sans-serif] text-xs">
      <Toolbar />
      <Banner />
      <div className="flex bg-black">
        <SideTabs />
        <main className="relative min-w-0 flex-1 overflow-hidden border-l border-[#8c1616]">
          <div className="flex h-5 items-center gap-[7px] leading-5 whitespace-nowrap text-white">
            <span className="text-[#c0c0c0]">日线(复权)</span>
            <span className="text-[#c0c0c0]">永新股份</span>
            <span className="-ml-0.5">刘氏操盘系统</span>
            <span className="-ml-0.5"><Indicator label="攻击线" value="18.42" color="text-white" up /></span>
            <Indicator label="防守线" value="17.95" color="text-[#a040e0]" />
            <Indicator label="生命线" value="19.31" color="text-[#e01818]" />
            <Indicator label="主力前沿" value="16.42" color="text-[#fffff0]" up />
            <span className="text-[#ffffc8]">EMA9: 15.80</span>
          </div>
          <PriceChart />
          <div className="flex h-[21px] items-center gap-2 border-t border-[#8c1616] whitespace-nowrap">
            <Indicator label="总手" value="46619" color="text-[#55e8f8]" />
            <Indicator label="MAVOL5" value="70626" color="text-[#f0f020]" />
            <Indicator label="MAVOL10" value="64473" color="text-white" />
            <button className="ml-auto flex h-[19px] w-[92px] items-center justify-end gap-4 self-start border-b border-l border-[#8c1616] pr-1 text-[#d0d0d0]">
              成交量
              <svg width={8} height={5}><path d="M0 0h8l-4 5z" fill="#d0d0d0" /></svg>
            </button>
          </div>
          <VolumeChart />
          <div className="absolute top-[292px] left-[866px] flex h-7 items-center rounded-xs border border-[#585858] bg-gradient-to-b from-[#505050] to-[#383838] px-1.5 whitespace-nowrap text-white">
            主力前沿:<span className="ml-1 font-['DejaVu_Sans',sans-serif]">16.19</span>
          </div>
        </main>
        <div className="w-[53px] shrink-0 border-l border-[#8c1616]">
          <PriceAxis />
        </div>
        <QuotePanel />
      </div>
      <div className="absolute right-0 bottom-[18px] flex h-[34px] w-[302px] items-end justify-end bg-black/90 pr-0.5 pb-px">
        <span className="h-[22px] bg-[#060603] px-0.5 font-['Noto_Sans_CJK_SC',sans-serif] text-xs leading-[22px] whitespace-nowrap text-[#141414]">
          股票公式股票软件下载[分析家公式网
          <span className="font-['Liberation_Mono',monospace] text-[10px]">www.88gs.com]</span>
        </span>
      </div>
      <footer className="h-2.5 bg-gradient-to-b from-[#101010] via-[#808080] to-[#ffffff]" />
    </div>
  );
}
